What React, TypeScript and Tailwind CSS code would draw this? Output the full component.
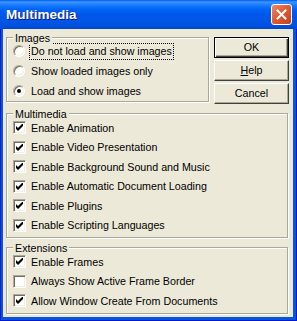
import type { ReactNode } from 'react'

const font = "font-['Liberation_Sans',Arial,sans-serif]"

function Group({ label, className, children }: { label: string; className: string; children: ReactNode }) {
  return (
    <div
      className={`relative border border-[#ACA899] shadow-[inset_1px_1px_0_#fff,1px_1px_0_#fff] ${className}`}
    >
      <span className="absolute -top-[7px] left-[6px] px-[2px] leading-[14px] bg-[#ECE9D8]">{label}</span>
      {children}
    </div>
  )
}

function Radio({ label, checked, focused }: { label: string; checked?: boolean; focused?: boolean }) {
  return (
    <div className="h-[20px] flex items-center pl-[6px]">
      <span className="relative w-[12px] h-[12px] rounded-full bg-white border border-t-[#ACA899] border-l-[#ACA899] border-r-white border-b-white shadow-[inset_1px_1px_0_#716F64,inset_-1px_-1px_0_#F1EFE2] flex items-center justify-center">
        {checked && <span className="w-[4px] h-[4px] rounded-full bg-black" />}
      </span>
      <span
        className={`ml-[4px] h-[17px] px-[1px] flex items-center border border-dotted ${
          focused ? 'border-black' : 'border-transparent'
        }`}
      >
        {label}
      </span>
    </div>
  )
}

function Check({ label, checked }: { label: string; checked?: boolean }) {
  return (
    <div className="h-[19.5px] flex items-center pl-[6px]">
      <span className="relative w-[13px] h-[13px] bg-white border border-t-[#ACA899] border-l-[#ACA899] border-r-white border-b-white shadow-[inset_1px_1px_0_#716F64,inset_-1px_-1px_0_#F1EFE2]">
        {checked && (
          <svg className="absolute left-[2px] top-[2px]" width="7" height="7" viewBox="0 0 7 7">
            <path d="M0 2 L2 4 L6 0 L7 0 L7 2 L2 7 L0 5 Z" fill="#000" />
          </svg>
        )}
      </span>
      <span className="ml-[4px] px-[1px]">{label}</span>
    </div>
  )
}

function Button({ children, isDefault }: { children: ReactNode; isDefault?: boolean }) {
  return (
    <button
      className={`w-[75px] h-[21px] bg-[#ECE9D8] flex items-center justify-center ${
        isDefault
          ? 'border border-black shadow-[inset_1px_1px_0_#fff,inset_-1px_-1px_0_#404040,inset_-2px_-2px_0_#ACA899]'
          : 'border border-t-white border-l-white border-r-[#404040] border-b-[#404040] shadow-[inset_-1px_-1px_0_#ACA899]'
      }`}
    >
      {children}
    </button>
  )
}

export default function App() {
  return (
    <div className={`w-[297px] h-[321px] flex flex-col bg-[#0855DD] shadow-[inset_1px_0_0_#0019CF,inset_-1px_0_0_#0019CF,inset_0_-1px_0_#0019CF] text-[10.7px] text-black ${font}`}>
      {/* title bar */}
      <div className="h-[29px] flex items-center pl-[6px] pr-[5px] bg-[linear-gradient(180deg,#0058EE_0px,#3D95FF_2px,#1A7CFF_5px,#0066F5_9px,#0058EA_14px,#0055E5_22px,#0050DD_26px,#0048D0_29px)]">
        <span className="flex-1 pt-[2px] text-white font-bold text-[13.5px] [text-shadow:1px_1px_0_#0A1883]">
          Multimedia
        </span>
        <div className="w-[21px] h-[21px] rounded-[3px] border border-white bg-[linear-gradient(135deg,#EE8A68_0%,#DF5C35_45%,#C7401C_100%)] flex items-center justify-center">
          <svg width="11" height="11" viewBox="0 0 11 11">
            <path d="M1.5 1.5 L9.5 9.5 M9.5 1.5 L1.5 9.5" stroke="#fff" strokeWidth="2" strokeLinecap="square" />
          </svg>
        </div>
      </div>

      {/* body */}
      <div className="flex-1 ml-[3px] mr-[4px] mb-[4px] bg-[#ECE9D8] pt-[8px] pl-[3px]">
        <div className="flex items-start">
          <Group label="Images" className="w-[203px] pt-[3px]">
            <Radio label="Do not load and show images" focused />
            <Radio label="Show loaded images only" />
            <Radio label="Load and show images" checked />
          </Group>
          <div className="ml-[5px] flex flex-col gap-[2px]">
            <Button isDefault>OK</Button>
            <Button>
              <span className="underline underline-offset-1">H</span>elp
            </Button>
            <Button>Cancel</Button>
          </div>
        </div>

        <Group label="Multimedia" className="mt-[9px] w-[282px] pt-[4px] pb-[2px]">
          <Check label="Enable Animation" checked />
          <Check label="Enable Video Presentation" checked />
          <Check label="Enable Background Sound and Music" checked />
          <Check label="Enable Automatic Document Loading" checked />
          <Check label="Enable Plugins" checked />
          <Check label="Enable Scripting Languages" checked />
        </Group>

        <Group label="Extensions" className="mt-[9px] w-[282px] pt-[4px] pb-[2px]">
          <Check label="Enable Frames" checked />
          <Check label="Always Show Active Frame Border" />
          <Check label="Allow Window Create From Documents" checked />
        </Group>
      </div>
    </div>
  )
}
